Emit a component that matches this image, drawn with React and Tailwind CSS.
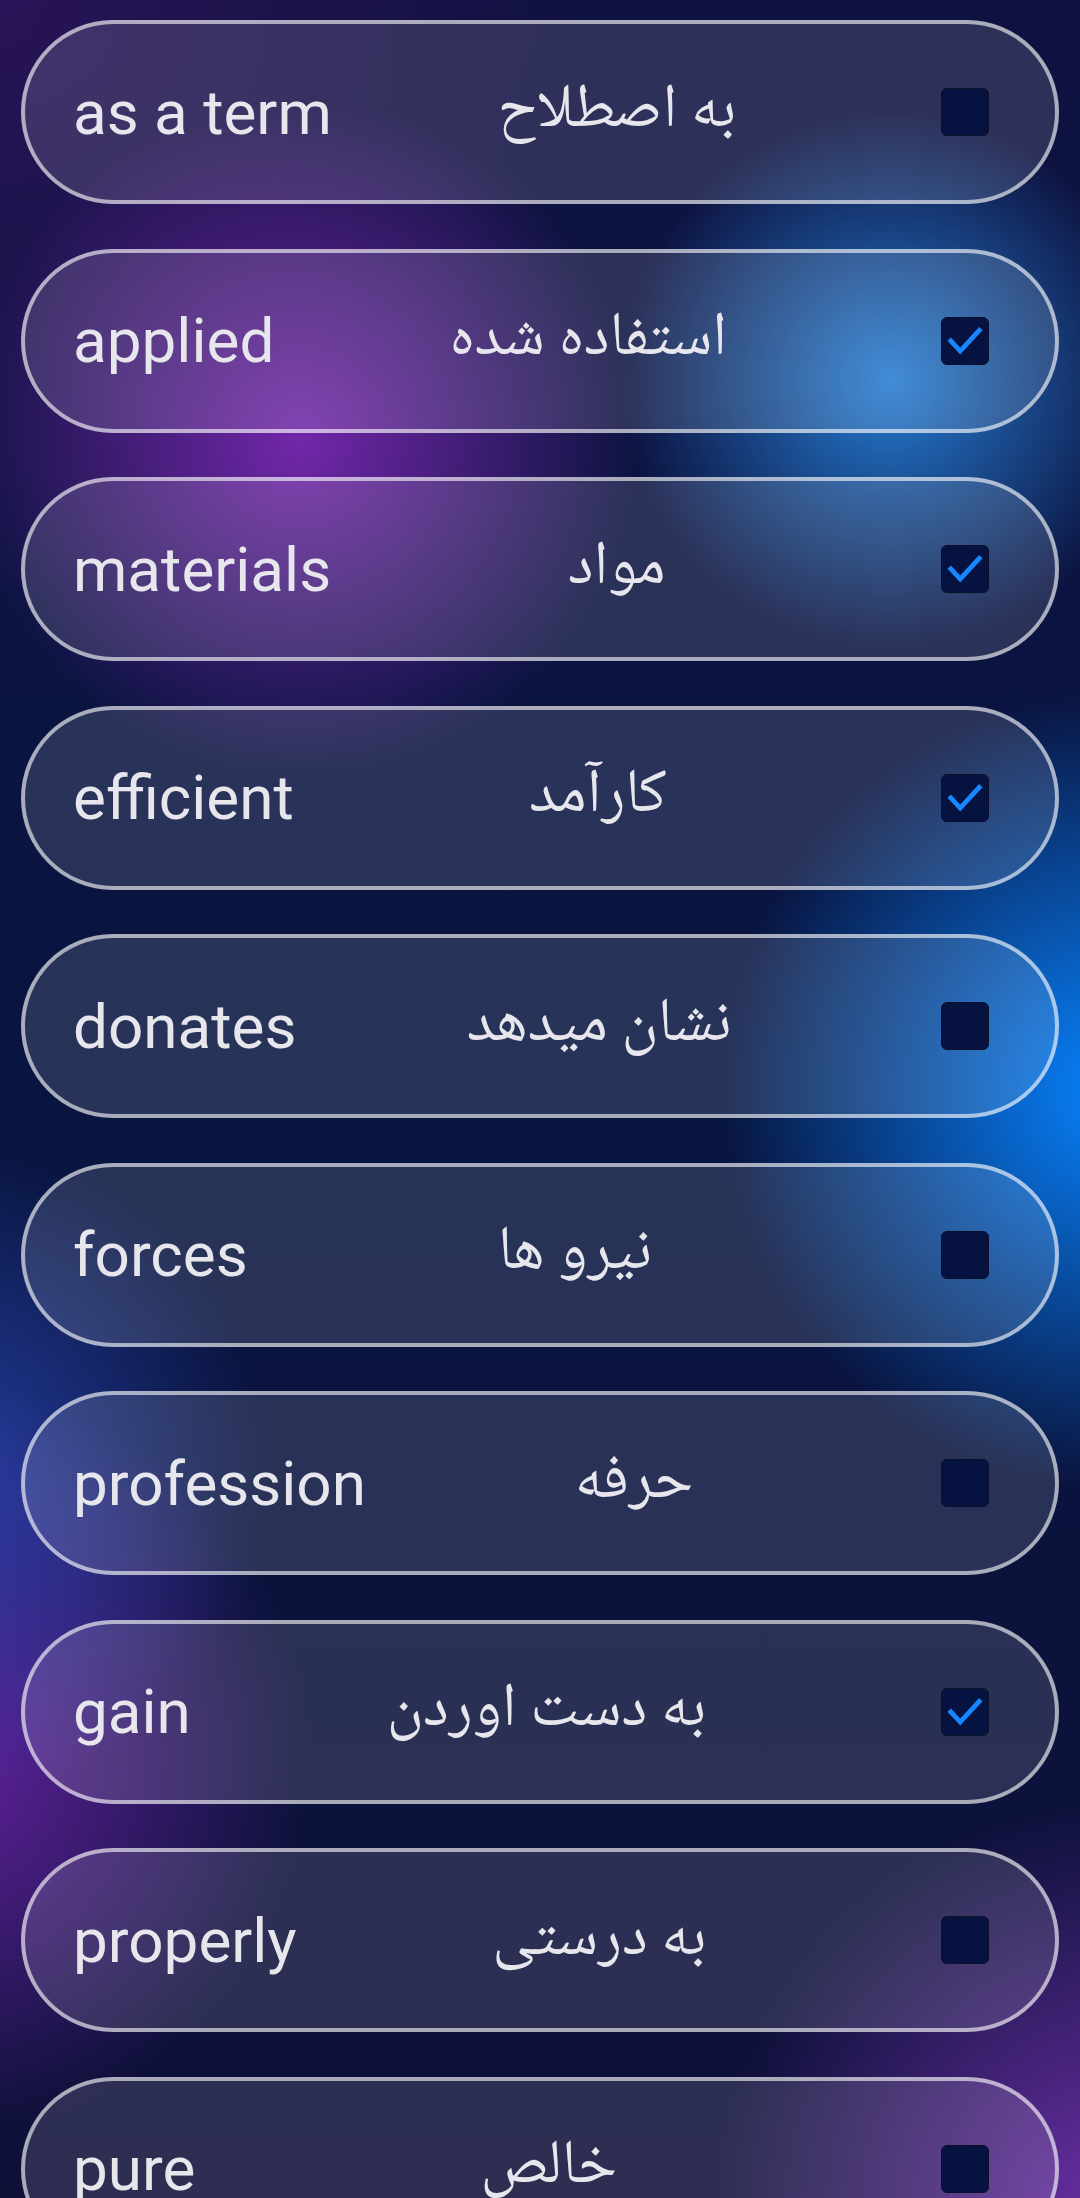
import React, { useState } from 'react';

const WORDS = [
    { en: 'as a term', fa: 'به اصطلاح', checked: false },
    { en: 'applied', fa: 'استفاده شده', checked: true },
    { en: 'materials', fa: 'مواد', checked: true },
    { en: 'efficient', fa: 'کارآمد', checked: true },
    { en: 'donates', fa: 'نشان میدهد', checked: false },
    { en: 'forces', fa: 'نیرو ها', checked: false },
    { en: 'profession', fa: 'حرفه', checked: false },
    { en: 'gain', fa: 'به دست اوردن', checked: true },
    { en: 'properly', fa: 'به درستی', checked: false },
    { en: 'pure', fa: 'خالص', checked: false },
];

// square checkbox like the android one
const CheckBox = ({ checked, onToggle }) => (
    <button
        type="button"
        onClick={onToggle}
        className="ml-[39px] w-[48px] h-[48px] shrink-0 rounded-[6px] bg-[#06123f] border border-[#0a0f2a] flex items-center justify-center"
    >
        {checked && (
            <svg width="48" height="48" viewBox="0 0 48 48" fill="none">
                <polyline points="7.5,22 19,34.5 40.5,11" stroke="#1787ff" strokeWidth="5" strokeLinejoin="miter" />
            </svg>
        )}
    </button>
);

const WordRow = ({ word, onToggle }) => (
    <div className="mx-[21px] h-[184px] shrink-0 rounded-full border-4 border-white/60 bg-white/[0.13] flex items-center pl-[48px] pr-[66px]">
        <span className="text-[62px] text-[#e6e6ec] font-['Roboto',sans-serif] whitespace-nowrap">
            {word.en}
        </span>
        <span
            dir="rtl"
            className="flex-1 text-center text-[62px] text-[#e6e6ec] font-['Noto_Naskh_Arabic','Noto_Sans_Arabic','DejaVu_Sans',sans-serif] whitespace-nowrap"
        >
            {word.fa}
        </span>
        <CheckBox checked={word.checked} onToggle={onToggle} />
    </div>
);

export default function App() {
    const [words, setWords] = useState(WORDS);

    const toggle = (idx) => {
        setWords(prev => prev.map((w, i) => (i === idx ? { ...w, checked: !w.checked } : w)));
    };

    return (
        <div className="h-[2198px] w-[1080px] overflow-hidden bg-[#0a1238] bg-[radial-gradient(circle_340px_at_300px_440px,rgba(120,40,175,0.95),transparent),radial-gradient(circle_270px_at_890px_380px,rgba(40,135,225,0.9),transparent),radial-gradient(circle_400px_at_1120px_1090px,rgba(8,132,255,1),transparent),radial-gradient(circle_330px_at_-60px_1470px,rgba(45,75,190,0.75),transparent),radial-gradient(circle_380px_at_-70px_1760px,rgba(105,35,165,0.95),transparent),radial-gradient(circle_420px_at_1130px_2220px,rgba(115,50,175,0.95),transparent),radial-gradient(circle_600px_at_0px_0px,rgba(45,20,90,0.85),transparent),linear-gradient(180deg,#0f1240_0%,#081540_50%,#0e1038_100%)]">
            <div className="flex flex-col gap-[44.5px] pt-[20px]">
                {words.map((w, i) => (
                    <WordRow key={w.en} word={w} onToggle={() => toggle(i)} />
                ))}
            </div>
        </div>
    );
}
